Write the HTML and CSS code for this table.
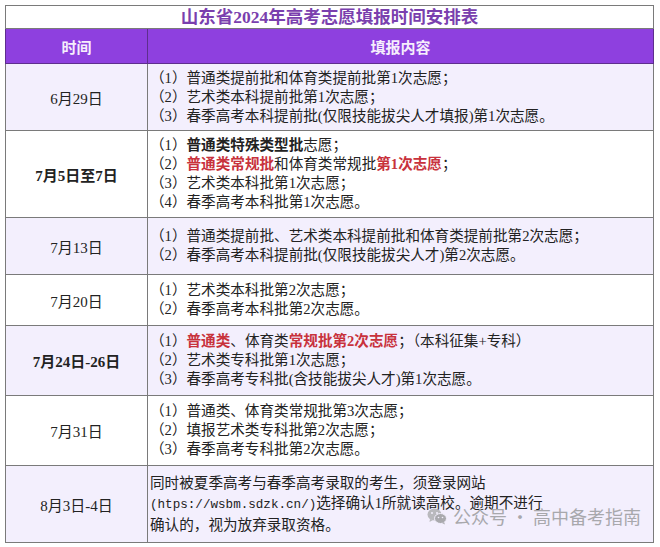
FILE: index.html
```html
<!DOCTYPE html>
<html lang="zh-CN">
<head>
<meta charset="utf-8">
<title>山东省2024年高考志愿填报时间安排表</title>
<link rel="stylesheet" href="styles.css">
</head>
<body>
<div class="page">
  <table class="sched">
    <colgroup><col class="c-date"><col class="c-body"></colgroup>
    <tr class="r-title"><td colspan="2" class="title">山东省2024年高考志愿填报时间安排表</td></tr>
    <tr class="r-head"><th>时间</th><th>填报内容</th></tr>
    <tr class="alt r1">
      <td class="date">6月29日</td>
      <td class="body">（1）普通类提前批和体育类提前批第1次志愿；<br>（2）艺术类本科提前批第1次志愿；<br>（3）春季高考本科提前批(仅限技能拔尖人才填报)第1次志愿。</td>
    </tr>
    <tr class="r2">
      <td class="date strong">7月5日至7日</td>
      <td class="body">（1）<b>普通类特殊类型批</b>志愿；<br>（2）<b class="red">普通类常规批</b>和体育类常规批<b class="red">第1次志愿</b>；<br>（3）艺术类本科批第1次志愿；<br>（4）春季高考本科批第1次志愿。</td>
    </tr>
    <tr class="alt r3">
      <td class="date">7月13日</td>
      <td class="body">（1）普通类提前批、艺术类本科提前批和体育类提前批第2次志愿；<br>（2）春季高考本科提前批(仅限技能拔尖人才)第2次志愿。</td>
    </tr>
    <tr class="r4">
      <td class="date">7月20日</td>
      <td class="body">（1）艺术类本科批第2次志愿；<br>（2）春季高考本科批第2次志愿。</td>
    </tr>
    <tr class="alt r5">
      <td class="date strong">7月24日-26日</td>
      <td class="body">（1）<b class="red">普通类</b>、体育类<b class="red">常规批第2次志愿</b>；（本科征集+专科）<br>（2）艺术类专科批第1次志愿；<br>（3）春季高考专科批(含技能拔尖人才)第1次志愿。</td>
    </tr>
    <tr class="r6">
      <td class="date">7月31日</td>
      <td class="body">（1）普通类、体育类常规批第3次志愿；<br>（2）填报艺术类专科批第2次志愿；<br>（3）春季高考专科批第2次志愿。</td>
    </tr>
    <tr class="alt r7">
      <td class="date">8月3日-4日</td>
      <td class="body">同时被夏季高考与春季高考录取的考生，须登录网站<br><span class="url">(htps://wsbm.sdzk.cn/)</span>选择确认1所就读高校。逾期不进行<br>确认的，视为放弃录取资格。</td>
    </tr>
  </table>
  <div class="wm">
    <svg class="wm-icon" width="20" height="17" viewBox="0 0 20 17" aria-hidden="true">
      <ellipse cx="7.5" cy="6.5" rx="7" ry="6" fill="#b9b9bd"/>
      <path d="M3 11 L2.5 14 L6 12 Z" fill="#b9b9bd"/>
      <ellipse cx="13.5" cy="10.5" rx="6" ry="5" fill="#a9a9ad" stroke="#f3effd" stroke-width="1"/>
      <path d="M17 14 L18 16.5 L15 15 Z" fill="#a9a9ad"/>
      <circle cx="5" cy="5" r="1" fill="#f3effd"/>
      <circle cx="10" cy="5" r="1" fill="#f3effd"/>
      <circle cx="11.5" cy="9.5" r="0.8" fill="#f3effd"/>
      <circle cx="15.5" cy="9.5" r="0.8" fill="#f3effd"/>
    </svg>
    <span class="wm-text">公众号 · 高中备考指南</span>
  </div>
</div>
</body>
</html>
```
FILE: styles.css
```css
html, body {
  margin: 0;
  padding: 0;
  background: #ffffff;
}
.page {
  position: relative;
  width: 660px;
  height: 547px;
  padding: 5px 0 0 5px;
  box-sizing: border-box;
  font-family: "Liberation Serif", "Noto Sans CJK SC", serif;
  color: #222222;
}
.sched {
  width: 649px;
  border-collapse: collapse;
  table-layout: fixed;
  border: 1px solid #6f6f6f;
}
.c-date { width: 142px; }
.sched td, .sched th {
  border: 1px solid #7a7a7a;
  padding: 0;
  vertical-align: middle;
}
.r-title { height: 23px; }
.title {
  text-align: center;
  color: #7a3fae;
  font-size: 17.5px;
  font-weight: bold;
  line-height: 22px;
  background: #ffffff;
}
.r-head { height: 35px; }
.r-head th {
  background: #8e40df;
  color: #f6eefc;
  font-size: 15px;
  font-weight: bold;
  border-color: #5e2e8e;
}
.alt td { background: #f3effd; }
.r1 { height: 67px; }
.r2 { height: 87px; }
.r3 { height: 57px; }
.r4 { height: 51px; }
.r5 { height: 70px; }
.r6 { height: 70px; }
.r7 { height: 77px; }
.date {
  text-align: center;
  font-size: 15px;
}
.date.strong { font-weight: bold; }
.body {
  font-size: 14.6px;
  line-height: 19px;
  padding: 0 0 0 2px !important;
  white-space: nowrap;
}
.r7 .body { line-height: 20px; }
.body b { font-weight: bold; }
.red { color: #c8323c; }
.url {
  font-family: "Liberation Mono", monospace;
  font-size: 12.6px;
}
.wm {
  position: absolute;
  left: 427px;
  top: 505px;
  display: flex;
  align-items: center;
  gap: 6px;
}
.wm-icon { display: block; }
.wm-text {
  font-family: "Noto Sans CJK SC", sans-serif;
  font-size: 18px;
  color: #a8a8ac;
  line-height: 22px;
}
```
